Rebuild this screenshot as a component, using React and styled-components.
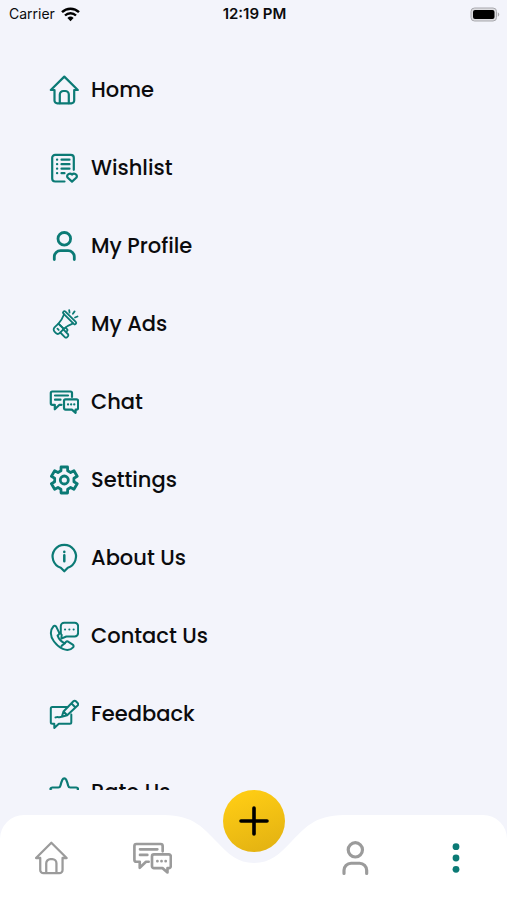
import React from "react";
import styled, { createGlobalStyle } from "styled-components";

const colors = {
  page: "#f3f4fb",
  bar: "#ffffff",
  teal: "#0b7a75",
  gray: "#9b9b9b",
  ink: "#0b0b0d",
};

const GlobalStyle = createGlobalStyle`
  *, *::before, *::after { box-sizing: border-box; }
  body {
    margin: 0;
    background: ${colors.page};
    color: ${colors.ink};
    font-family: Poppins, Inter, "Open Sans", sans-serif;
  }
`;

const Screen = styled.div`
  display: flex;
  flex-direction: column;
  height: 100vh;
  overflow: hidden;
`;

const StatusBar = styled.header`
  display: grid;
  grid-template-columns: 1fr auto 1fr;
  align-items: center;
  flex: none;
  height: 28px;
  padding: 0 7px 0 9px;
  font-family: Inter, sans-serif;
  font-size: 14px;
  line-height: 20px;
`;

const Carrier = styled.div`
  display: flex;
  align-items: center;
  gap: 6px;
`;

const Time = styled.time`
  font-size: 15px;
  font-weight: 600;
`;

const BatterySlot = styled.div`
  display: flex;
  justify-content: flex-end;
`;

const Menu = styled.nav`
  flex: 1;
  min-height: 0;
  overflow: hidden auto;
  padding-top: 23px;
  scrollbar-width: none;
`;

const MenuList = styled.ul`
  margin: 0;
  padding: 0;
  list-style: none;
`;

const MenuLink = styled.a`
  display: flex;
  align-items: center;
  gap: 12px;
  height: 78px;
  padding-left: 49px;
  color: inherit;
  font-size: 21px;
  font-weight: 500;
  line-height: 32px;
  text-decoration: none;
`;

const Icon = styled.svg`
  display: block;
  flex: none;
  width: ${(p) => p.$size}px;
  height: ${(p) => p.$size}px;
  color: ${(p) => p.$color};
  fill: none;
  stroke: currentColor;
  stroke-width: ${(p) => p.$weight};
  stroke-linecap: round;
  stroke-linejoin: round;
`;

const Footer = styled.footer`
  position: relative;
  flex: none;
  padding-top: 25px;
`;

const TabBar = styled.nav`
  position: relative;
  display: grid;
  grid-template-columns: repeat(5, 1fr);
  height: 85px;
  border-radius: 24px 24px 0 0;
  background: ${colors.bar};
`;

const Notch = styled.svg`
  position: absolute;
  top: 0;
  left: 50%;
  width: 180px;
  height: 48px;
  transform: translateX(-50%);
  fill: ${colors.page};
`;

const Tab = styled.a`
  display: grid;
  place-items: center;
  grid-column: ${(p) => p.$column};
`;

const AddButton = styled.button`
  position: absolute;
  top: 0;
  left: 50%;
  display: grid;
  place-items: center;
  width: 62px;
  height: 62px;
  padding: 0;
  border: 0;
  border-radius: 50%;
  background: linear-gradient(160deg, #fdcb14 15%, #e4b312 90%);
  transform: translateX(-50%);
  cursor: pointer;
`;

const gearPath = (() => {
  const point = (radius, degrees) => {
    const a = (degrees * Math.PI) / 180;
    return `${(15.3 + radius * Math.cos(a)).toFixed(2)} ${(15 + radius * Math.sin(a)).toFixed(2)}`;
  };
  const points = [];
  for (let tooth = 0; tooth < 6; tooth += 1) {
    const mid = tooth * 60 - 90;
    points.push(point(9.8, mid - 20), point(13.4, mid - 14), point(13.4, mid + 14), point(9.8, mid + 20));
  }
  return `M${points.join("L")}Z`;
})();

const drawings = {
  home: (
    <>
      <path d="M5.5 15H1.8L15.3 1.6 28.8 15h-3.6v10.6a2.8 2.8 0 0 1-2.8 2.8H8.3a2.8 2.8 0 0 1-2.8-2.8Z" />
      <path d="M10.800 28.2v-8.6a3.6 3.6 0 0 1 3.6-3.6h1.8a3.6 3.6 0 0 1 3.6 3.6v8.6" />
    </>
  ),
  wishlist: (
    <>
      <path d="M15.5 28.5H6.2a3 3 0 0 1-3-3V4.8a3 3 0 0 1 3-3h15.600a3 3 0 0 1 3 3v12" />
      <path d="M8 6.7h.2M12.5 6.7h8M8 11.2h.2M12.5 11.2h8M8 15.700h.2M12.5 15.700h8M8 20.2h.2M12.5 20.2h3" />
      <path d="M23 28.6l-4.5-4.100a2.700 2.700 0 0 1 4.5-2.900 2.700 2.700 0 0 1 4.5 2.900Z" />
    </>
  ),
  profile: (
    <>
      <circle cx="15.3" cy="7.800" r="6.3" />
      <path d="M5.3 28.6v-2.800a6.2 6.2 0 0 1 6.2-6.2h7.6a6.2 6.2 0 0 1 6.2 6.2v2.800" />
    </>
  ),
  ads: (
    <>
      <g transform="translate(20.6 8.8) rotate(-45)">
        <rect x="-1.4" y="-8.700" width="2.800" height="17.400" rx="1.4" />
        <path d="M-1.400-6.400C-4.500-5-8-3.800-12-3.800V3.800C-8 3.800-4.500 5-1.400 6.400" />
        <path d="M-12-3.800h-5.500a3 3 0 0 0-3 3v1.600a3 3 0 0 0 3 3h5.500Z" />
        <path d="M-16.300-.9v1.800" />
        <path d="M-17 3.800v6.400a1.700 1.700 0 0 0 1.700 1.700h.9a1.700 1.700 0 0 0 1.700-1.700V3.800M-12.500 7.500h1.300a1.400 1.400 0 0 0 1.400-1.400V4" />
      </g>
      <path d="M20.200 1.200l.3 2.300M25.600 2.400l-1.700 2.300M28.500 7.500l-2.500 1" />
    </>
  ),
  chat: (
    <>
      <path d="M12.5 17.800h-2L5.800 22.300v-4.5H3.3a1.5 1.5 0 0 1-1.5-1.5V6a1.5 1.5 0 0 1 1.5-1.5h18.200A1.5 1.5 0 0 1 23 6v4" />
      <path d="M6 8.5h13M6 12.700h5.500" />
      <path d="M16.5 12.300h11.100a1.5 1.5 0 0 1 1.5 1.5v7.300a1.5 1.5 0 0 1-1.5 1.5h-1v3.200l-3.700-3.200h-6.400a1.5 1.5 0 0 1-1.5-1.5v-7.300a1.5 1.5 0 0 1 1.5-1.5Z" />
      <path d="M19 17.400h.1M22.100 17.400h.1M25.200 17.400h.1" />
    </>
  ),
  settings: (
    <>
      <path d={gearPath} />
      <circle cx="15.3" cy="15" r="4" />
    </>
  ),
  about: (
    <>
      <path d="M11.800 24.700A11.700 11.700 0 1 1 18.800 24.700L15.300 28.300Z" />
      <path d="M15.3 8.700v.3M15.3 12.200v6" strokeWidth="2.5" />
    </>
  ),
  contact: (
    <>
      <path d="M15.200 1.700h10.500a3.4 3.4 0 0 1 3.4 3.4v7a3.4 3.4 0 0 1-3.4 3.4h-8.400l-5 2.200.4-3.700a3.400 3.400 0 0 1-.9-2.300V5.100A3.400 3.400 0 0 1 15.200 1.700Z" />
      <path d="M16 8.600h.1M20.300 8.600h.1M24.600 8.600h.1" />
      <path d="M4.500 5.200C1 9 .8 15 5 20.500c2.500 3.300 5.500 6 8.800 7.400 4 1.600 8 1 10.300-1.600.8-.9.6-2-.4-2.700l-4.200-2.800c-1-.7-2-.5-2.800.4l-.9 1.100C12.500 20.800 9.800 18 8.600 14.600l1-.9c.8-.7.9-1.700.3-2.600L7.200 5.600c-.7-1-1.900-1.200-2.700-.4Z" />
      <path d="M15.800 22.300l-3.200 2.600" />
    </>
  ),
  feedback: (
    <>
      <path d="M18.500 8H3.3A1.5 1.5 0 0 0 1.800 9.500v13.700a1.5 1.5 0 0 0 1.5 1.5h2v4.200l4.500-4.200h11a1.5 1.5 0 0 0 1.5-1.5v-7.700" />
      <path d="M12.800 17.700l1.700-5.200L24.400 2.300c.8-.8 1.700-.8 2.500 0l1.700 1.700c.8.8.8 1.700 0 2.500L18.200 16.300ZM14.500 12.500l3.700 3.800M22.500 4.500l4 4M6.500 18.400c2.500-.8 4 .4 6.300-.7" />
    </>
  ),
  rate: (
    <path d="M13.400 2.800c.9-1.800 2.900-1.800 3.800 0 1 2 1.500 4 2 6 .3 1.200 1 1.700 2.100 1.700h6c1.800 0 2.400 1.700 1.100 2.800l-6.200 5 2.300 8.200c.4 1.600-1 2.600-2.400 1.700l-6.800-4.800-6.800 4.800c-1.400.9-2.800-.1-2.400-1.700l2.300-8.200-6.200-5c-1.300-1.100-.7-2.800 1.100-2.800h6c1.100 0 1.800-.5 2.100-1.700.5-2 1-4 2-6Z" />
  ),
  more: (
    <g fill="currentColor" stroke="none">
      <circle cx="15" cy="5" r="3" />
      <circle cx="15" cy="15" r="3" />
      <circle cx="15" cy="25" r="3" />
    </g>
  ),
  plus: <path d="M15 2v26M2 15h26" />,
};

function Glyph({ name, size = 30, color = colors.teal, weight = 2.2 }) {
  return (
    <Icon viewBox="0 0 30 30" $size={size} $color={color} $weight={weight} aria-hidden="true">
      {drawings[name]}
    </Icon>
  );
}

const menuItems = [
  { label: "Home", icon: "home" },
  { label: "Wishlist", icon: "wishlist" },
  { label: "My Profile", icon: "profile", weight: 2.8 },
  { label: "My Ads", icon: "ads", weight: 1.8 },
  { label: "Chat", icon: "chat" },
  { label: "Settings", icon: "settings", weight: 2.8 },
  { label: "About Us", icon: "about" },
  { label: "Contact Us", icon: "contact", weight: 2 },
  { label: "Feedback", icon: "feedback", weight: 2 },
  { label: "Rate Us", icon: "rate" },
];

const tabs = [
  { label: "Home", icon: "home", column: 1, size: 34, weight: 2 },
  { label: "Chat", icon: "chat", column: 2, size: 40, weight: 2 },
  { label: "Profile", icon: "profile", column: 4, size: 34, weight: 2.8 },
  { label: "More", icon: "more", column: 5, size: 34, color: colors.teal },
];

function WifiIcon() {
  return (
    <svg width="19" height="15" viewBox="0 0 19 15" aria-hidden="true">
      <g fill="none" stroke="#000" strokeWidth="2.4">
        <path d="M1 5.200a12.200 12.200 0 0 1 17 0" />
        <path d="M4 8.500a8 8 0 0 1 11 0" />
      </g>
      <path d="M6.400 11a4.600 4.600 0 0 1 6.200 0L9.500 14.300Z" />
    </svg>
  );
}

function BatteryIcon() {
  return (
    <svg width="30" height="15" viewBox="0 0 30 15" aria-hidden="true">
      <rect x="1" y="1" width="25.5" height="13" rx="3.5" fill="#dcdce0" stroke="#a9a9ae" />
      <rect x="3" y="3" width="21.5" height="9" rx="2" />
      <path d="M27.800 5.300c2 .8 2 3.600 0 4.400Z" fill="#a9a9ae" />
    </svg>
  );
}

export default function App() {
  return (
    <Screen>
      <GlobalStyle />
      <StatusBar>
        <Carrier>
          Carrier
          <WifiIcon />
        </Carrier>
        <Time>12:19 PM</Time>
        <BatterySlot>
          <BatteryIcon />
        </BatterySlot>
      </StatusBar>
      <Menu aria-label="Menu">
        <MenuList>
          {menuItems.map(({ label, icon, weight }) => (
            <li key={label}>
              <MenuLink href={`#${icon}`}>
                <Glyph name={icon} weight={weight} />
                {label}
              </MenuLink>
            </li>
          ))}
        </MenuList>
      </Menu>
      <Footer>
        <TabBar aria-label="Tabs">
          <Notch viewBox="0 0 180 48" aria-hidden="true">
            <path d="M0 0C30 0 40 14 53 27C64 39 74 48 90 48C106 48 116 39 127 27C140 14 150 0 180 0Z" />
          </Notch>
          {tabs.map(({ label, icon, column, size, weight, color = colors.gray }) => (
            <Tab key={label} href={`#${icon}`} aria-label={label} $column={column}>
              <Glyph name={icon} size={size} weight={weight} color={color} />
            </Tab>
          ))}
        </TabBar>
        <AddButton type="button" aria-label="Add">
          <Glyph name="plus" color="#000000" weight={3.6} />
        </AddButton>
      </Footer>
    </Screen>
  );
}
